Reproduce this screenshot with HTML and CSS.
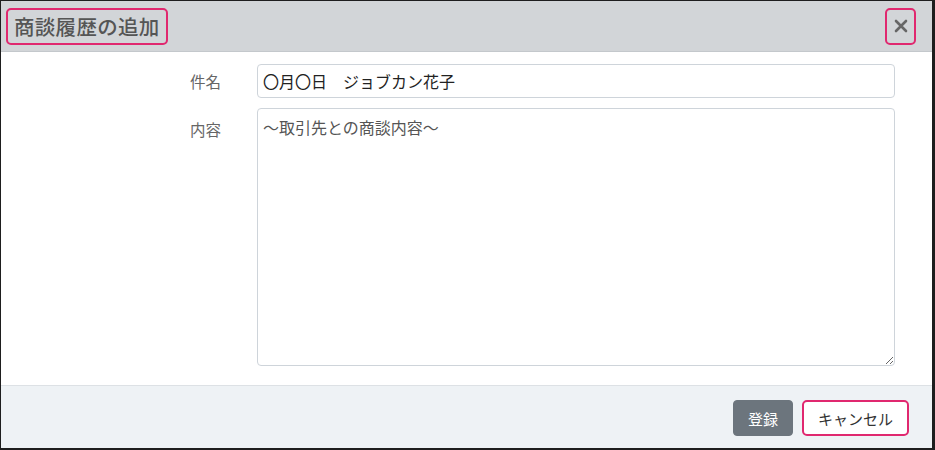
FILE: index.html
```html
<!DOCTYPE html>
<html lang="ja">
<head>
<meta charset="utf-8">
<link rel="stylesheet" href="styles.css">
</head>
<body>
<div class="frame">
  <div class="header">
    <div class="title-box"><h1 class="title">商談履歴の追加</h1></div>
    <div class="close-box">
      <svg class="close" width="14" height="14" viewBox="0 0 14 14" aria-label="閉じる">
        <path d="M2 2 L12 12 M12 2 L2 12" stroke="#666" stroke-width="2.6" stroke-linecap="round" fill="none"/>
      </svg>
    </div>
  </div>
  <div class="body">
    <label class="label label-input">件名</label>
    <input class="field" type="text" value="〇月〇日　ジョブカン花子">
    <label class="label label-area">内容</label>
    <textarea class="area">〜取引先との商談内容〜</textarea>
  </div>
  <div class="footer">
    <button class="btn btn-save">登録</button>
    <button class="btn btn-cancel">キャンセル</button>
  </div>
</div>
</body>
</html>
```
FILE: styles.css
```css
* { box-sizing: border-box; }
html, body { margin: 0; padding: 0; background: #fff; }
body {
  font-family: "Noto Sans CJK JP", "Noto Sans", sans-serif;
  color: #333;
}
.frame {
  width: 935px;
  height: 450px;
  border-style: solid;
  border-color: #1e1e1e;
  border-width: 1px 3px 2px 1px;
  display: flex;
  flex-direction: column;
  background: #fff;
}
.header {
  height: 51px;
  flex: none;
  background: #d2d5d8;
  border-bottom: 1px solid #c4c8cc;
  display: flex;
  align-items: center;
  justify-content: space-between;
  padding: 0 16px 0 5px;
}
.title-box {
  width: 162px;
  height: 37px;
  border: 2px solid #e0286f;
  border-radius: 5px;
  display: flex;
  align-items: center;
  padding-left: 6px;
}
.title {
  margin: 0;
  font-size: 20.5px;
  font-weight: 500;
  color: #555;
  letter-spacing: 0.3px;
  line-height: 1;
}
.close-box {
  width: 31px;
  height: 37px;
  border: 2px solid #e0286f;
  border-radius: 5px;
  display: flex;
  align-items: center;
  justify-content: center;
}
.close { display: block; margin-left: 1px; }
.body {
  flex: 1;
  display: grid;
  grid-template-columns: 221px 638px;
  grid-template-rows: 34px 258px;
  column-gap: 35px;
  row-gap: 10px;
  padding: 12px 0 0 0;
  border-bottom: 1px solid #dde1e5;
}
.label {
  font-size: 15.5px;
  color: #666;
  text-align: right;
  padding-right: 1px;
}
.label-input { align-self: center; }
.label-area { padding-top: 10px; }
.field, .area {
  font-family: "Noto Sans CJK JP", "Noto Sans", sans-serif;
  font-size: 16px;
  border: 1px solid #ced4da;
  border-radius: 4px;
  background: #fff;
  margin: 0;
  outline: none;
}
.field {
  height: 34px;
  padding: 0 5px;
  color: #222;
}
.area {
  height: 258px;
  padding: 9px 5px;
  color: #555;
  line-height: 1.2;
}
.footer {
  height: 62px;
  flex: none;
  background: #eef2f5;
  display: flex;
  justify-content: flex-end;
  align-items: flex-start;
  padding: 14px 23px 0 0;
  gap: 9px;
}
.btn {
  height: 36px;
  font-family: "Noto Sans CJK JP", "Noto Sans", sans-serif;
  font-size: 15px;
  border-radius: 4px;
  padding: 0;
  margin: 0;
}
.btn-save {
  width: 60px;
  background: #6c757d;
  border: 1px solid #6c757d;
  color: #fff;
}
.btn-cancel {
  width: 107px;
  background: #fff;
  border: 2px solid #e0286f;
  border-radius: 5px;
  color: #333;
}
```
